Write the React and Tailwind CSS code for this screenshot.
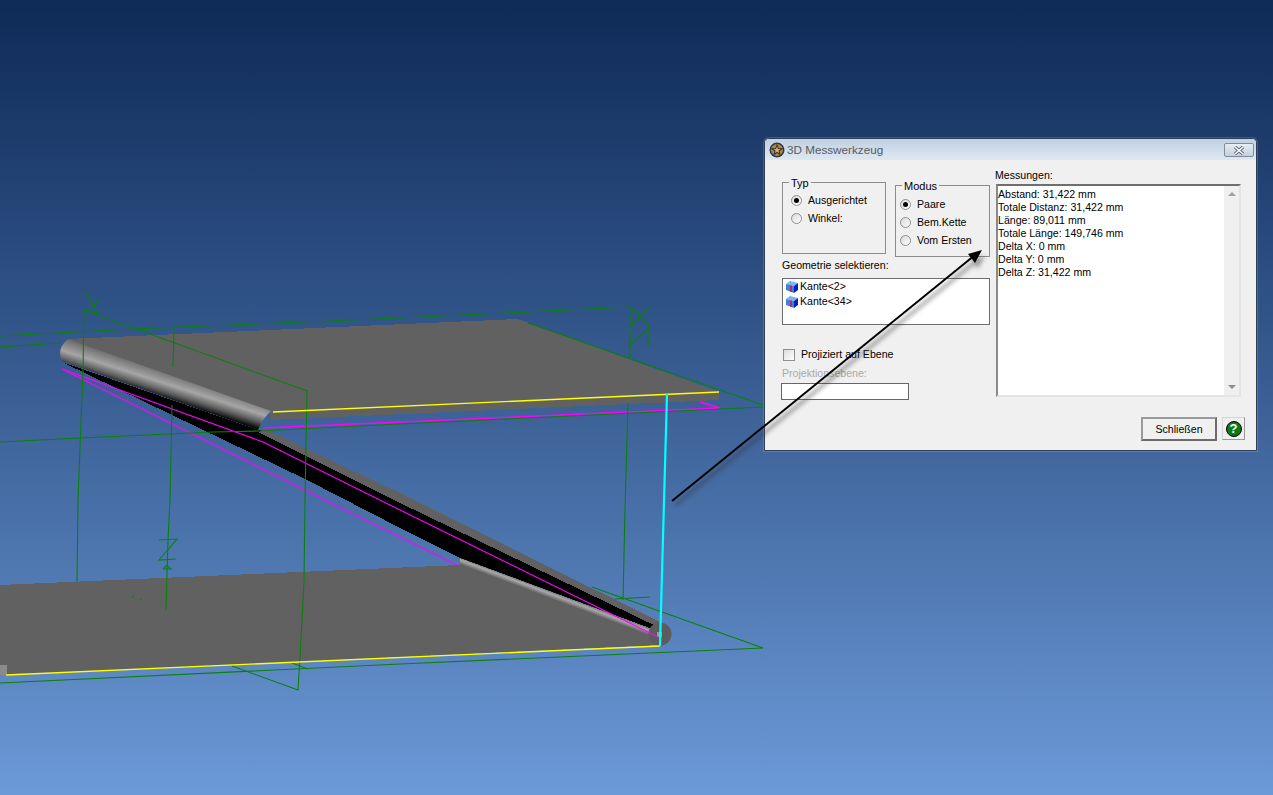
import React from 'react';

const Radio = ({ checked, label }) => (
  <div className="flex items-center h-[18px]">
    <span className="w-[11px] h-[11px] rounded-full border border-[#8e8f8f] bg-gradient-to-br from-[#d8d8d8] to-white flex items-center justify-center shrink-0">
      {checked && <span className="w-[5px] h-[5px] rounded-full bg-black" />}
    </span>
    <span className="ml-[6px] whitespace-nowrap">{label}</span>
  </div>
);

const EdgeIcon = () => (
  <svg width="14" height="14" viewBox="0 0 14 14" className="shrink-0">
    <path d="M1 4 L5 1 L13 3 L9 6 Z" fill="#7fb2ee" />
    <path d="M1 4 L9 6 V13 L1 10 Z" fill="#3f7fe0" />
    <path d="M9 6 L13 3 V10 L9 13 Z" fill="#0a1fb8" />
    <path d="M6 5.5 V12" stroke="#e01020" strokeWidth="1.4" />
  </svg>
);

const AppIcon = () => (
  <svg width="16" height="16" viewBox="0 0 16 16" className="shrink-0">
    <circle cx="8" cy="8" r="7.5" fill="#2b3a55" />
    <circle cx="8" cy="8" r="6" fill="#b8862a" />
    <path d="M8 1.5 L9.6 6.2 L14.6 6.3 L10.6 9.2 L12 14 L8 11.1 L4 14 L5.4 9.2 L1.4 6.3 L6.4 6.2 Z" fill="#26375f" />
    <path d="M8 4.5 L9 7 L11.5 7.2 L9.5 8.7 L10.2 11 L8 9.7 L6 11 L6.6 8.7 L4.6 7.2 L7 7 Z" fill="#f2b21c" />
  </svg>
);

const Scene = () => {
  const G = '#0b800b';
  const greenLines = [
    '0,336 133,329 400,318 630,307',
    '0,347 60,343',
    '84,310 83,370 78,500 77,582',
    '86,292 97,313 84,310',
    '100,298 92,308',
    '84,310 307,391 305,500 304,582',
    '0,442 80,438 213,432 260,431 400,424 763,407',
    '174,328 173,367',
    '172,405 170,500 168,540 166,610',
    '159,540 177,539 159,560 176,559',
    '163,569 171,569 167,565 163,569',
    '631,307 650,327 630,345',
    '649,307 632,325',
    '648,327 648,347',
    '630,307 630,358',
    '528,323 763,405',
    '628,403 625,510 623,600',
    '615,599 650,597',
    '592,587 763,648',
    '0,683 400,664 763,648',
    '304,582 300,657 298,690 232,666',
    '292,663 308,669',
  ];
  return (
    <svg width="1273" height="795" viewBox="0 0 1273 795" className="absolute left-0 top-0">
      <defs>
        <linearGradient id="rod" gradientUnits="userSpaceOnUse" x1="168" y1="372" x2="160" y2="397">
          <stop offset="0" stopColor="#6e6e6e" />
          <stop offset="0.45" stopColor="#a6a6a6" />
          <stop offset="0.75" stopColor="#5e5e5e" />
          <stop offset="1" stopColor="#0c0c0c" />
        </linearGradient>
        <linearGradient id="rodLow" gradientUnits="userSpaceOnUse" x1="563" y1="594" x2="560" y2="602">
          <stop offset="0" stopColor="#606060" />
          <stop offset="0.5" stopColor="#a8a8a8" />
          <stop offset="1" stopColor="#606060" />
        </linearGradient>
      </defs>

      {/* lower plate */}
      <polygon points="0,585 460,565 460,560 660,636 660,645 6,675 0,675" fill="#616161" shapeRendering="crispEdges" />
      <rect x="0" y="665" width="7" height="10" fill="#8a8a8a" />

      {/* slanted part */}
      <polygon points="62,362 307,480 400,528 460,558 655,630 660,628 268,432 258,430" fill="#000000" shapeRendering="crispEdges" />
      <polygon points="267,430 400,493 662,623 660,628 400,503 258,432" fill="#616161" shapeRendering="crispEdges" />
      <polygon points="460,558 660,632 660,640 460,566" fill="url(#rodLow)" />
      <circle cx="660" cy="634" r="11.5" fill="#5c5c5c" />
      <rect x="657" y="632" width="5" height="5" fill="#9a9a9a" />

      {/* upper plate */}
      <polygon points="68,339 518,319 719,392 719,400 270,420 270,411" fill="#616161" shapeRendering="crispEdges" />
      <path d="M68,339 L271,411 Q263,418 258,430 L62,361 Q56,349 68,339 Z" fill="url(#rod)" />

      <g fill="none" stroke="#ff00ff" strokeWidth="1.1">
        <polyline points="62,369 263,442 400,510 658,637" />
        <polyline points="62,369 325,500 400,537 457,565" />
      </g>
      <polyline points="263,428 720,408 700,402" fill="none" stroke="#ff00ff" strokeWidth="1.5" />

      <g fill="none" stroke={G} strokeWidth="1.1">
        {greenLines.map((points, i) => (
          <polyline key={i} points={points} />
        ))}
      </g>
      <rect x="132" y="596" width="1.5" height="1.5" fill={G} />
      <rect x="140" y="599" width="1.5" height="1.5" fill={G} />

      <line x1="273" y1="412" x2="719" y2="392" stroke="#ffff00" strokeWidth="1.4" />
      <line x1="6" y1="675" x2="660" y2="646" stroke="#ffff00" strokeWidth="1.4" />
      <line x1="667" y1="394" x2="660" y2="646" stroke="#00ffff" strokeWidth="2.2" />
    </svg>
  );
};

const Arrow = () => (
  <svg width="1273" height="795" viewBox="0 0 1273 795" className="absolute left-0 top-0 pointer-events-none">
    <defs>
      <filter id="blur" x="-10%" y="-10%" width="120%" height="120%">
        <feGaussianBlur stdDeviation="2" />
      </filter>
    </defs>
    <g filter="url(#blur)" opacity="0.45">
      <line x1="675" y1="505" x2="975" y2="262" stroke="#333" strokeWidth="3.5" />
      <polygon points="985,256 971,259 978,269" fill="#333" />
    </g>
    <line x1="672" y1="501" x2="975" y2="255" stroke="#000" strokeWidth="2" />
    <polygon points="982,250 968,254 975,263" fill="#000" />
  </svg>
);

const Dialog = () => (
  <div className="absolute left-[764px] top-[138px] w-[493px] h-[313px] border border-[#2f3f52] rounded-t-[5px] bg-[#f0f0f0] text-[10.6px] leading-[13px] text-black shadow-[0_0_0_1px_rgba(255,255,255,0.15)] font-['Liberation_Sans',Arial,sans-serif] overflow-hidden">
    {/* title bar */}
    <div className="h-[21px] bg-gradient-to-b from-[#bfd0e2] to-[#dfe8f1] flex items-center pl-[4px] pr-[2px]">
      <AppIcon />
      <span className="ml-[2px] text-[11.7px] text-[#555b63]">3D Messwerkzeug</span>
      <div className="ml-auto w-[30px] h-[14px] mt-[1px] border border-[#7f8d9c] rounded-[2px] bg-gradient-to-b from-[#e6edf4] to-[#c3d0de] flex items-center justify-center">
        <svg width="12" height="9" viewBox="0 0 12 9">
          <path d="M2 1 L10 8 M10 1 L2 8" stroke="#5f6b78" strokeWidth="3.4" />
          <path d="M2 1 L10 8 M10 1 L2 8" stroke="#fff" strokeWidth="1.6" />
        </svg>
      </div>
    </div>

    <div className="flex pl-[17px] pt-[16px]">
      {/* left column */}
      <div className="w-[208px]">
        <div className="flex items-start gap-[9px]">
          <fieldset className="w-[104px] h-[78px] border border-[#8c8c8c] pl-[8px] pt-[2px]">
            <legend className="-ml-[2px] px-[2px] text-[11px] translate-y-px">Typ</legend>
            <Radio checked label="Ausgerichtet" />
            <Radio label="Winkel:" />
          </fieldset>
          <fieldset className="w-[95px] h-[78px] mt-[3px] border border-[#8c8c8c] pl-[4px] pt-[3px]">
            <legend className="ml-[2px] px-[2px] text-[11px] translate-y-px">Modus</legend>
            <Radio checked label="Paare" />
            <Radio label="Bem.Kette" />
            <Radio label="Vom Ersten" />
          </fieldset>
        </div>

        <div className="mt-[2px]">Geometrie selektieren:</div>
        <div className="mt-[6px] h-[47px] border border-[#6e6e6e] bg-white pl-[2px]">
          {['Kante<2>', 'Kante<34>'].map((name) => (
            <div key={name} className="flex items-center h-[15px] gap-[1px]">
              <EdgeIcon />
              <span>{name}</span>
            </div>
          ))}
        </div>

        <div className="flex items-center mt-[23px] ml-[1px]">
          <span className="w-[12px] h-[12px] border border-[#8e8f8f] bg-gradient-to-br from-[#dcdcdc] to-white" />
          <span className="ml-[6px]">Projiziert auf Ebene</span>
        </div>
        <div className="mt-[6px] text-[#a9a9a9]">Projektionsebene:</div>
        <div className="mt-[3px] -ml-[1px] w-[128px] h-[17px] border border-[#666] bg-white" />
      </div>

      {/* right column */}
      <div className="ml-[5px] w-[246px] -mt-[7px]">
        <div className="h-[13px]">Messungen:</div>
        <div className="ml-[1px] mt-[2px] h-[213px] flex border-t-2 border-l-2 border-t-[#6f6f6f] border-l-[#8a8a8a] border-b-2 border-r-2 border-b-[#e4e4e4] border-r-[#e4e4e4] bg-white">
          <div className="flex-1 pt-[2px]">
            <div>Abstand: 31,422 mm</div>
            <div>Totale Distanz: 31,422 mm</div>
            <div>Länge: 89,011 mm</div>
            <div>Totale Länge: 149,746 mm</div>
            <div>Delta X: 0 mm</div>
            <div>Delta Y: 0 mm</div>
            <div>Delta Z: 31,422 mm</div>
          </div>
          <div className="w-[15px] bg-[#f0f0f0] flex flex-col items-center justify-between py-[6px]">
            <span className="w-0 h-0 border-x-[4px] border-x-transparent border-b-[4px] border-b-[#a0a0a0]" />
            <span className="w-0 h-0 border-x-[4px] border-x-transparent border-t-[4px] border-t-[#8a8a8a]" />
          </div>
        </div>
      </div>
    </div>

    {/* buttons */}
    <div className="absolute right-[11px] bottom-[9px] flex items-start gap-[5px]">
      <button className="w-[76px] h-[24px] border-2 border-t-[#9a9a9a] border-l-[#9a9a9a] border-b-[#6c6c6c] border-r-[#6c6c6c] bg-[#f0f0f0] text-[10.6px] text-black">
        Schließen
      </button>
      <div className="w-[23px] h-[23px] border border-[#d4d4d4] border-b-[#9a9a9a] border-r-[#9a9a9a] flex items-center justify-center">
        <span className="w-[16px] h-[16px] rounded-full bg-[#0a7a12] border border-black text-white font-bold text-[13px] leading-[14px] text-center">?</span>
      </div>
    </div>
  </div>
);

export default function App() {
  return (
    <div className="relative w-[1273px] h-[795px] overflow-hidden bg-gradient-to-b from-[#0e2a57] to-[#6c9ad8]">
      <Scene />
      <Dialog />
      <Arrow />
    </div>
  );
}
